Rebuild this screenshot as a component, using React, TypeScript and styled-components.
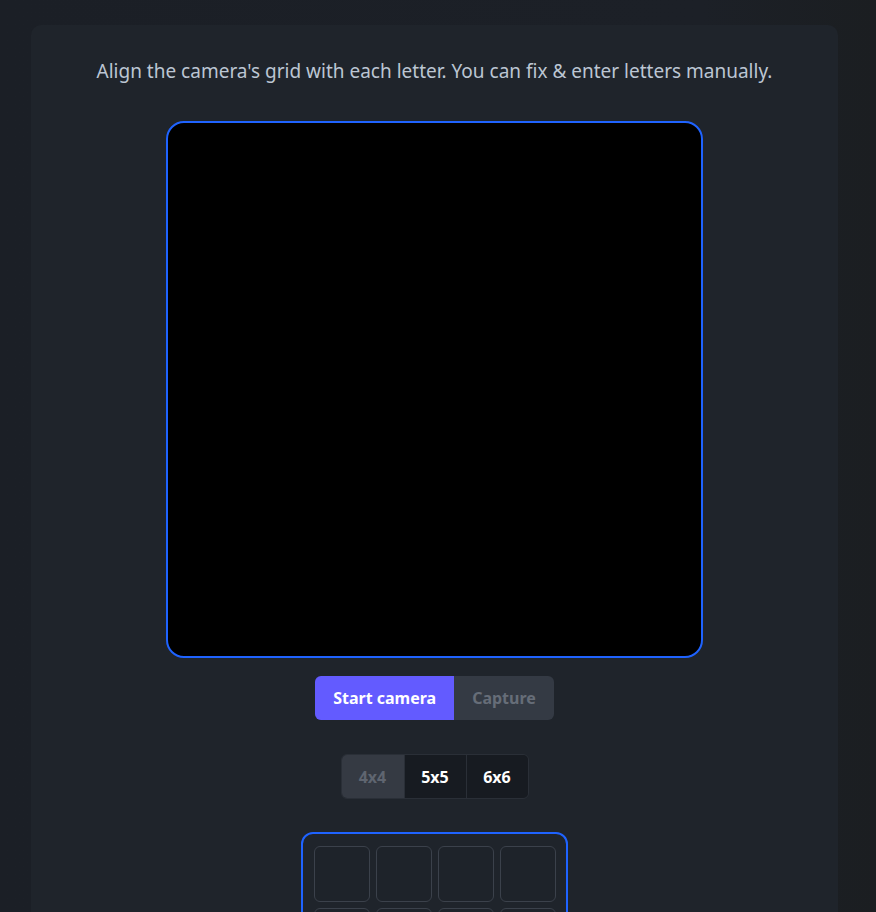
import React from 'react';
import styled, { createGlobalStyle } from 'styled-components';

// page shell
const GlobalStyle = createGlobalStyle`
  html, body {
    margin: 0;
    padding: 0;
  }
  body {
    min-height: 100vh;
    background: linear-gradient(90deg, #1b1f26 0%, #1c2027 80%, #1b1e21 100%);
    font-family: "Noto Sans", "Open Sans", sans-serif;
    overflow: hidden;
  }
`;

const Page = styled.div`
  padding: 25px 38px 0 31px;
`;

const Card = styled.main`
  width: 807px;
  min-height: 900px;
  background: #1f242b;
  border-radius: 10px;
  padding: 31px 0 0;
  box-sizing: border-box;
  display: flex;
  flex-direction: column;
  align-items: center;
`;

const Hint = styled.p`
  margin: 0;
  font-size: 19px;
  line-height: 31px;
  color: #bcc6d3;
`;

const Viewfinder = styled.div`
  margin-top: 34px;
  width: 537px;
  height: 537px;
  box-sizing: border-box;
  border: 2px solid #1f63ff;
  border-radius: 18px;
  background: #000;
`;

const ButtonRow = styled.div`
  margin-top: 18px;
  display: flex;
  border-radius: 6px;
  overflow: hidden;
`;

const ActionButton = styled.button<{ $primary?: boolean }>`
  height: 44px;
  padding: 0 18px;
  border: none;
  font-family: "Noto Sans", sans-serif;
  font-weight: 700;
  font-size: 16px;
  background: ${p => (p.$primary ? '#635bff' : '#343a44')};
  color: ${p => (p.$primary ? '#ffffff' : '#666d78')};
  box-shadow: ${p => (p.$primary ? '0 2px 4px rgba(99, 91, 255, 0.35)' : 'none')};
  cursor: pointer;
`;

const SizeToggle = styled.div`
  margin-top: 34px;
  display: flex;
  border: 1px solid #2a2f37;
  border-radius: 6px;
  overflow: hidden;
`;

const SizeButton = styled.button<{ $active?: boolean }>`
  width: 62px;
  height: 43px;
  border: none;
  border-left: ${p => (p.$active ? 'none' : '1px solid #2a2f37')};
  background: ${p => (p.$active ? '#353a43' : '#171b21')};
  color: ${p => (p.$active ? '#5f6570' : '#ffffff')};
  font-family: "Noto Sans", sans-serif;
  font-weight: 700;
  font-size: 16px;
  cursor: pointer;
`;

const LetterBoard = styled.div`
  margin-top: 33px;
  padding: 12px 10px 12px 11px;
  border: 2px solid #1f63ff;
  border-radius: 12px;
  display: grid;
  grid-template-columns: repeat(4, 56px);
  gap: 6px;
`;

const LetterCell = styled.input`
  width: 56px;
  height: 56px;
  box-sizing: border-box;
  border: 1px solid #3b414b;
  border-radius: 6px;
  background: #1e232a;
  color: #fff;
  text-align: center;
  font-size: 22px;
  font-family: "Noto Sans", sans-serif;
`;

const App = () => {
  const cells = Array.from({ length: 16 }, (_, i) => i);
  return (
    <>
      <GlobalStyle />
      <Page>
        <Card>
          <Hint>Align the camera's grid with each letter. You can fix &amp; enter letters manually.</Hint>
          <Viewfinder />
          <ButtonRow>
            <ActionButton $primary>Start camera</ActionButton>
            <ActionButton disabled>Capture</ActionButton>
          </ButtonRow>
          <SizeToggle>
            <SizeButton $active>4x4</SizeButton>
            <SizeButton>5x5</SizeButton>
            <SizeButton>6x6</SizeButton>
          </SizeToggle>
          <LetterBoard>
            {cells.map(i => (
              <LetterCell key={i} maxLength={1} />
            ))}
          </LetterBoard>
        </Card>
      </Page>
    </>
  );
};

export default App;
